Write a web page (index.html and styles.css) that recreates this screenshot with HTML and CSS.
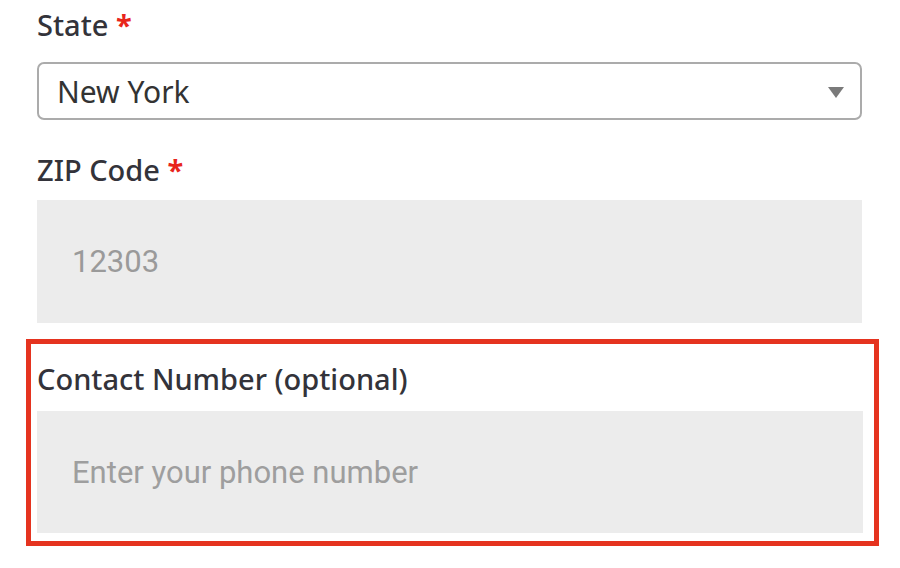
FILE: index.html
```html
<!DOCTYPE html>
<html lang="en">

<head>
    <meta charset="UTF-8">
    <meta name="viewport" content="width=device-width, initial-scale=1.0">
    <title>Shipping Address</title>
    <link rel="stylesheet" href="styles.css">
</head>

<body>
    <form class="address-form">
        <div class="field">
            <label class="field-label" for="state">State <span class="required">*</span></label>
            <div class="select-box" id="state">
                <span class="select-value">New York</span>
                <svg class="select-arrow" width="16" height="11" viewBox="0 0 16 11">
                    <path d="M0 0 H16 L8 11 Z" fill="#7a7a7a" />
                </svg>
            </div>
        </div>

        <div class="field">
            <label class="field-label" for="zip">ZIP Code <span class="required">*</span></label>
            <input class="text-input" id="zip" type="text" value="12303" readonly>
        </div>

        <div class="field field-highlight">
            <label class="field-label" for="phone">Contact Number (optional)</label>
            <input class="text-input" id="phone" type="tel" placeholder="Enter your phone number">
        </div>
    </form>
</body>

</html>
```

FILE: styles.css
```css
body {
    margin: 0;
    background-color: #fff;
    font-family: "Noto Sans", Arial, sans-serif;
}

.address-form {
    width: 825px;
    padding: 7px 0 0 37px;
}

.field {
    display: flex;
    flex-direction: column;
}

.field-label {
    font-size: 29px;
    font-weight: 500;
    line-height: 36px;
    color: #33333a;
}

.required {
    color: #e8251b;
    font-weight: 700;
}

.select-box {
    display: flex;
    align-items: center;
    justify-content: space-between;
    height: 54px;
    margin-top: 19px;
    padding: 0 16px 0 18px;
    border: 2px solid #ababab;
    border-radius: 7px;
    font-size: 30px;
    color: #333;
}

.select-arrow {
    margin-top: 2px;
}

.field + .field {
    margin-top: 32px;
}

.text-input {
    box-sizing: border-box;
    width: 100%;
    height: 123px;
    margin-top: 12px;
    padding: 0 35px;
    border: none;
    border-radius: 0;
    background-color: #ececec;
    font-family: Roboto, Arial, sans-serif;
    font-size: 31px;
    color: #9a9a9a;
    outline: none;
}

.text-input::placeholder {
    color: #9e9e9e;
}

/* outlined field block */
.field-highlight {
    margin: 17px -17px 0 -11px;
    padding: 17px 11px 8px 6px;
    border: 5px solid #e5331f;
}

.field-highlight .text-input {
    margin-top: 14px;
    height: 122px;
}

.field + .field-highlight {
    margin-top: 16px;
}
```
